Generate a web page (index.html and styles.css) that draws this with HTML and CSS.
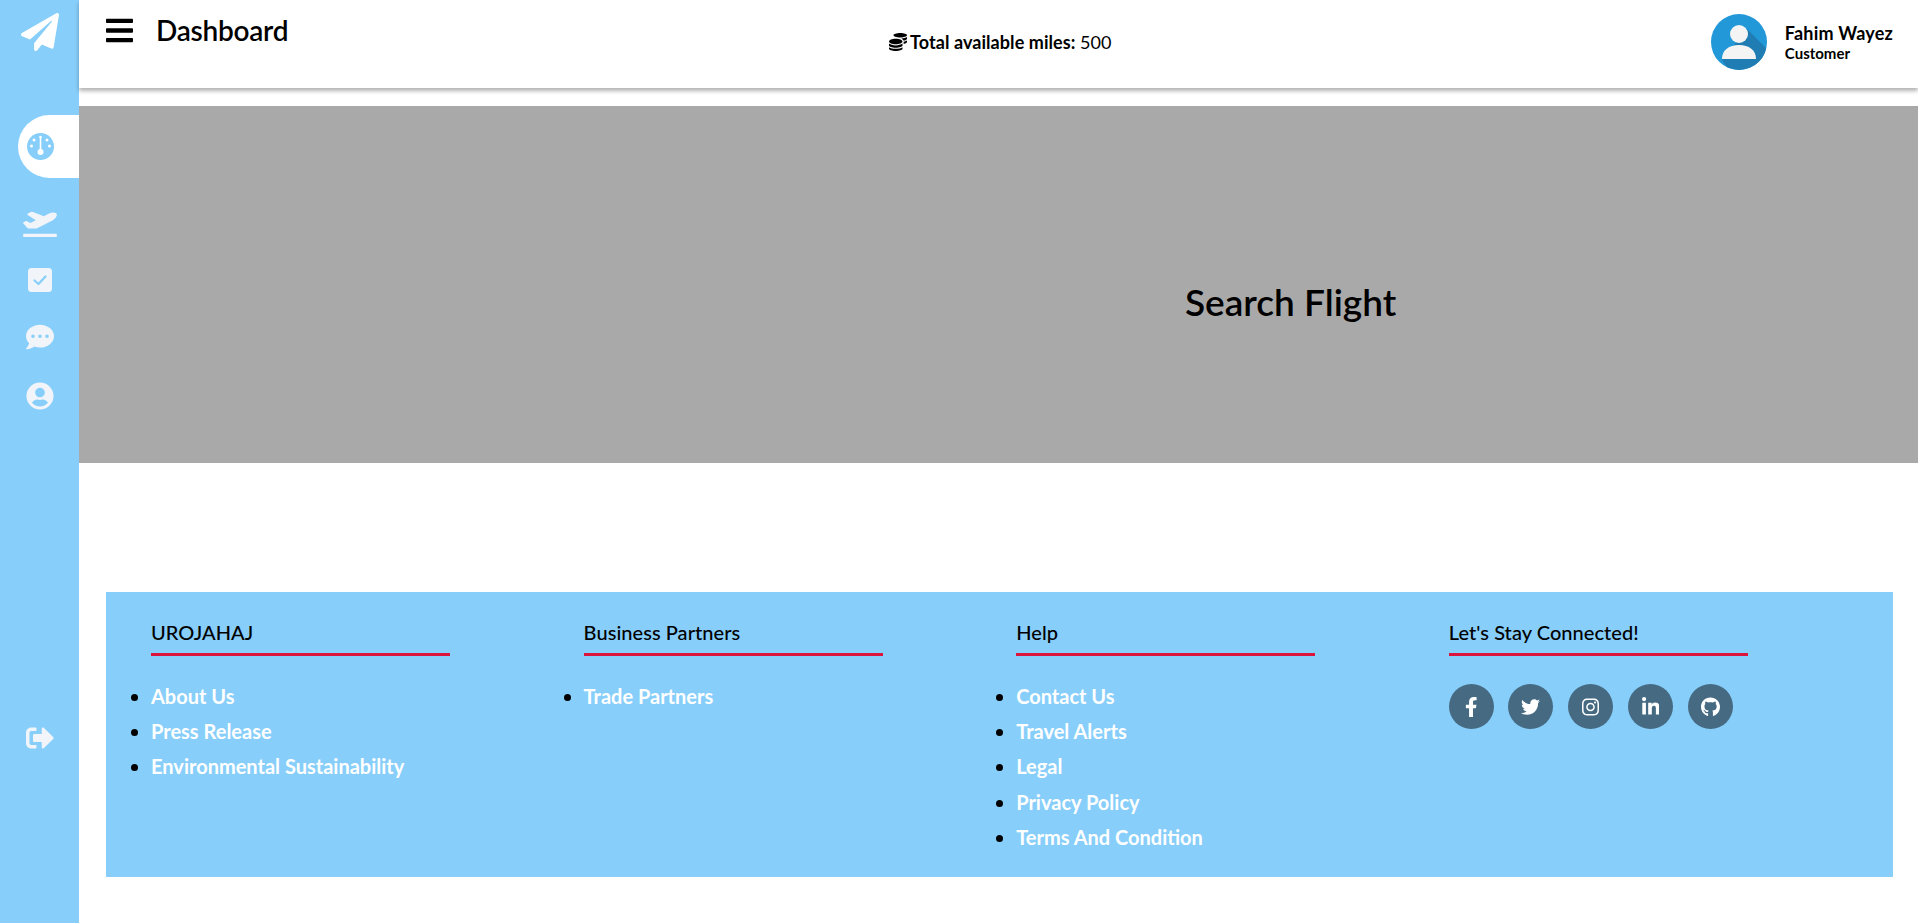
FILE: index.html
```html
<!DOCTYPE html>
<html lang="en">
<head>
<meta charset="utf-8">
<title>Dashboard</title>
<link rel="stylesheet" href="styles.css">
</head>
<body>
<div class="app">
  <aside class="sidebar">
    <svg class="logo" viewBox="0 0 512 512"><path d="M476 3.2L12.5 270.6c-18.1 10.4-15.8 35.6 2.2 43.2L121 358.4l287.3-253.2c5.5-4.9 13.3 2.6 8.6 8.3L176 407v80.5c0 23.6 28.5 32.9 42.5 15.8L282 426l124.6 52.2c14.2 6 30.4-2.9 33-18.2l72-432C515 7.8 493.3-6.8 476 3.2z"/></svg>
    <div class="pill">
      <svg class="gauge" viewBox="0 0 27 27"><circle cx="13.5" cy="13.5" r="13.5" class="gauge-bg"/><circle cx="13.5" cy="4" r="1.3" class="gauge-fg"/><circle cx="7" cy="7" r="1.5" class="gauge-fg"/><circle cx="20" cy="7" r="1.5" class="gauge-fg"/><circle cx="4.5" cy="13" r="1.5" class="gauge-fg"/><circle cx="22.5" cy="13" r="1.5" class="gauge-fg"/><rect x="12.7" y="4" width="1.6" height="14" class="gauge-fg"/><circle cx="13.5" cy="19" r="3" class="gauge-fg"/></svg>
    </div>
    <nav class="side-nav">
      <svg class="plane" viewBox="0 0 640 512"><path d="M624 448H16c-8.84 0-16 7.16-16 16v32c0 8.84 7.16 16 16 16h608c8.84 0 16-7.16 16-16v-32c0-8.84-7.16-16-16-16zM80.55 341.27c6.28 6.84 15.1 10.72 24.33 10.71l130.54-.18a65.62 65.62 0 0 0 29.64-7.12l290.96-147.65c26.74-13.57 50.71-32.94 67.02-58.31 18.31-28.48 20.3-49.09 13.07-63.65-7.21-14.57-24.74-25.27-58.25-27.45-29.85-1.94-59.54 5.92-86.28 19.48l-98.51 49.99-218.7-82.06a17.799 17.799 0 0 0-18-1.11L90.62 67.29c-10.67 5.41-13.25 19.65-5.17 28.53l156.22 98.1-103.21 52.38-72.35-36.47a17.804 17.804 0 0 0-16.07.02L9.91 230.22c-10.44 5.3-13.19 19.12-5.57 28.08l76.21 82.97z"/></svg>
      <svg class="check" viewBox="0 0 24 24"><rect width="24" height="24" rx="3.5"/><path class="check-mark" d="M6.5 12.5l4 3.5 7-7.5"/></svg>
      <svg class="nav-icon" viewBox="0 0 512 512"><path d="M256 32C114.6 32 0 125.1 0 240c0 49.6 21.4 95 57 130.7C44.5 421.1 2.7 466 2.2 466.5c-2.2 2.3-2.8 5.7-1.5 8.7S4.8 480 8 480c66.3 0 116-31.8 140.6-51.4 32.7 12.3 69 19.4 107.4 19.4 141.4 0 256-93.1 256-208S397.4 32 256 32zM128 272c-17.7 0-32-14.3-32-32s14.3-32 32-32 32 14.3 32 32-14.3 32-32 32zm128 0c-17.7 0-32-14.3-32-32s14.3-32 32-32 32 14.3 32 32-14.3 32-32 32zm128 0c-17.7 0-32-14.3-32-32s14.3-32 32-32 32 14.3 32 32-14.3 32-32 32z"/></svg>
      <svg class="nav-icon" viewBox="0 0 496 512"><path d="M248 8C111 8 0 119 0 256s111 248 248 248 248-111 248-248S385 8 248 8zm0 96c48.6 0 88 39.4 88 88s-39.4 88-88 88-88-39.4-88-88 39.4-88 88-88zm0 344c-58.7 0-111.3-26.6-146.5-68.2 18.8-35.4 55.6-59.8 98.5-59.8 2.4 0 4.8.4 7.1 1.1 13 4.2 26.6 6.9 40.9 6.9 14.3 0 28-2.7 40.9-6.9 2.3-.7 4.7-1.1 7.1-1.1 42.9 0 79.7 24.4 98.5 59.8C359.3 421.4 306.7 448 248 448z"/></svg>
    </nav>
    <svg class="logout" viewBox="0 0 512 512"><path d="M497 273L329 441c-15 15-41 4.5-41-17v-96H152c-13.3 0-24-10.7-24-24v-96c0-13.3 10.7-24 24-24h136V88c0-21.4 25.9-32 41-17l168 168c9.3 9.4 9.3 24.6 0 34zM192 436v-40c0-6.6-5.4-12-12-12H96c-17.7 0-32-14.3-32-32V160c0-17.7 14.3-32 32-32h84c6.6 0 12-5.4 12-12V76c0-6.6-5.4-12-12-12H96c-53 0-96 43-96 96v192c0 53 43 96 96 96h84c6.6 0 12-5.4 12-12z"/></svg>
  </aside>
  <main class="main">
    <header class="topbar">
      <div class="title-group">
        <svg class="bars" viewBox="0 0 448 512"><path d="M16 132h416c8.837 0 16-7.163 16-16V76c0-8.837-7.163-16-16-16H16C7.163 60 0 67.163 0 76v40c0 8.837 7.163 16 16 16zm0 160h416c8.837 0 16-7.163 16-16v-40c0-8.837-7.163-16-16-16H16c-8.837 0-16 7.163-16 16v40c0 8.837 7.163 16 16 16zm0 160h416c8.837 0 16-7.163 16-16v-40c0-8.837-7.163-16-16-16H16c-8.837 0-16 7.163-16 16v40c0 8.837 7.163 16 16 16z"/></svg>
        <h1 class="page-title">Dashboard</h1>
      </div>
      <div class="miles">
        <svg class="coins" viewBox="0 0 512 512"><path d="M0 405.3V448c0 35.3 86 64 192 64s192-28.7 192-64v-42.7C342.7 434.4 267.2 448 192 448S41.3 434.4 0 405.3zM320 128c106 0 192-28.7 192-64S426 0 320 0 128 28.7 128 64s86 64 192 64zM0 300.4V352c0 35.3 86 64 192 64s192-28.7 192-64v-51.6c-41.3 34-116.9 51.6-192 51.6S41.3 334.4 0 300.4zm416 11c57.3-11.1 96-31.7 96-55.4v-42.7c-23.2 16.4-57.3 27.6-96 34.5v63.6zM192 160C86 160 0 195.8 0 240s86 80 192 80 192-35.8 192-80-86-80-192-80zm219.3 56.3c60-10.8 100.7-32 100.7-56.3v-42.7c-35.5 25.1-96.5 38.6-160.7 41.8 29.5 14.3 51.2 33.5 60 57.2z"/></svg>
        <span><b class="miles-label">Total available miles:</b> 500</span>
      </div>
      <div class="profile">
        <svg class="avatar" viewBox="0 0 56 56"><defs><clipPath id="av"><circle cx="28" cy="28" r="28"/></clipPath></defs><circle cx="28" cy="28" r="28" class="av-bg"/><path class="av-shade" clip-path="url(#av)" d="M36 15L60 39V60H20L11 46Z"/><circle cx="28" cy="20" r="9" class="av-fg"/><path class="av-fg" d="M11 45c0-9 7-14 17-14s17 5 17 14z"/></svg>
        <div class="who">
          <div class="who-name">Fahim Wayez</div>
          <div class="who-role">Customer</div>
        </div>
      </div>
    </header>
    <section class="hero">
      <h2 class="hero-title">Search Flight</h2>
    </section>
    <footer class="footer">
      <div class="col">
        <h3 class="col-title">UROJAHAJ</h3>
        <ul class="links">
          <li>About Us</li>
          <li>Press Release</li>
          <li>Environmental Sustainability</li>
        </ul>
      </div>
      <div class="col">
        <h3 class="col-title">Business Partners</h3>
        <ul class="links">
          <li>Trade Partners</li>
        </ul>
      </div>
      <div class="col">
        <h3 class="col-title">Help</h3>
        <ul class="links">
          <li>Contact Us</li>
          <li>Travel Alerts</li>
          <li>Legal</li>
          <li>Privacy Policy</li>
          <li>Terms And Condition</li>
        </ul>
      </div>
      <div class="col">
        <h3 class="col-title">Let's Stay Connected!</h3>
        <div class="socials">
          <span class="social"><svg class="s-f" viewBox="0 0 320 512"><path d="M279.14 288l14.22-92.66h-88.91v-60.13c0-25.35 12.42-50.06 52.24-50.06h40.42V6.26S260.43 0 225.36 0c-73.22 0-121.08 44.38-121.08 124.72v70.62H22.89V288h81.39v224h100.17V288z"/></svg></span>
          <span class="social"><svg class="s-t" viewBox="0 0 512 512"><path d="M459.37 151.716c.325 4.548.325 9.097.325 13.645 0 138.72-105.583 298.558-298.558 298.558-59.452 0-114.68-17.219-161.137-47.106 8.447.974 16.568 1.299 25.34 1.299 49.055 0 94.213-16.568 130.274-44.832-46.132-.975-84.792-31.188-98.112-72.772 6.498.974 12.995 1.624 19.818 1.624 9.421 0 18.843-1.3 27.614-3.573-48.081-9.747-84.143-51.98-84.143-102.985v-1.299c13.969 7.797 30.214 12.67 47.431 13.319-28.264-18.843-46.781-51.005-46.781-87.391 0-19.492 5.197-37.36 14.294-52.954 51.655 63.675 129.3 105.258 216.365 109.807-1.624-7.797-2.599-15.918-2.599-24.04 0-57.828 46.782-104.934 104.934-104.934 30.213 0 57.502 12.67 76.67 33.137 23.715-4.548 46.456-13.32 66.599-25.34-7.798 24.366-24.366 44.833-46.132 57.827 21.117-2.273 41.584-8.122 60.426-16.243-14.292 20.791-32.161 39.308-52.628 54.253z"/></svg></span>
          <span class="social"><svg class="s-i" viewBox="0 0 448 512"><path d="M224.1 141c-63.6 0-114.9 51.3-114.9 114.9s51.3 114.9 114.9 114.9S339 319.5 339 255.9 287.7 141 224.1 141zm0 189.6c-41.1 0-74.7-33.5-74.7-74.7s33.5-74.7 74.7-74.7 74.7 33.5 74.7 74.7-33.6 74.7-74.7 74.7zm146.4-194.3c0 14.9-12 26.8-26.8 26.8-14.9 0-26.8-12-26.8-26.8s12-26.8 26.8-26.8 26.8 12 26.8 26.8zm76.1 27.2c-1.7-35.9-9.9-67.7-36.2-93.9-26.2-26.2-58-34.4-93.9-36.2-37-2.1-147.9-2.1-184.9 0-35.8 1.7-67.6 9.9-93.9 36.1s-34.4 58-36.2 93.9c-2.1 37-2.1 147.9 0 184.9 1.7 35.9 9.9 67.7 36.2 93.9s58 34.4 93.9 36.2c37 2.1 147.9 2.1 184.9 0 35.9-1.7 67.7-9.9 93.9-36.2 26.2-26.2 34.4-58 36.2-93.9 2.1-37 2.1-147.8 0-184.8zM398.8 388c-7.8 19.6-22.9 34.7-42.6 42.6-29.5 11.7-99.5 9-132.1 9s-102.7 2.6-132.1-9c-19.6-7.8-34.7-22.9-42.6-42.6-11.7-29.5-9-99.5-9-132.1s-2.6-102.7 9-132.1c7.8-19.6 22.9-34.7 42.6-42.6 29.5-11.7 99.5-9 132.1-9s102.7-2.6 132.1 9c19.6 7.8 34.7 22.9 42.6 42.6 11.7 29.5 9 99.5 9 132.1s2.7 102.7-9 132.1z"/></svg></span>
          <span class="social"><svg class="s-l" viewBox="0 0 448 512"><path d="M100.28 448H7.4V148.9h92.88zM53.79 108.1C24.09 108.1 0 83.5 0 53.8a53.79 53.79 0 0 1 107.58 0c0 29.7-24.1 54.3-53.79 54.3zM447.9 448h-92.68V302.4c0-34.7-.7-79.2-48.29-79.2-48.29 0-55.69 37.7-55.69 76.7V448h-92.78V148.9h89.08v40.8h1.3c12.4-23.5 42.69-48.3 87.88-48.3 94 0 111.28 61.9 111.28 142.3V448z"/></svg></span>
          <span class="social"><svg class="s-g" viewBox="0 0 496 512"><path d="M244.8 8C106.1 8 0 113.3 0 252c0 110.9 69.8 205.8 169.5 239.2 12.8 2.3 17.3-5.6 17.3-12.1 0-6.2-.3-40.4-.3-61.4 0 0-70 15-84.7-29.8 0 0-11.4-29.1-27.8-36.6 0 0-22.9-15.7 1.6-15.4 0 0 24.9 2 38.6 25.8 21.9 38.6 58.6 27.5 72.9 20.9 2.3-16 8.8-27.1 16-33.7-55.9-6.2-112.3-14.3-112.3-110.5 0-27.5 7.6-41.3 23.6-58.9-2.6-6.5-11.1-33.3 2.6-67.9 20.9-6.5 69 27 69 27 20-5.6 41.5-8.5 62.8-8.5s42.8 2.9 62.8 8.5c0 0 48.1-33.6 69-27 13.7 34.7 5.2 61.4 2.6 67.9 16 17.7 25.8 31.5 25.8 58.9 0 96.5-58.9 104.2-114.8 110.5 9.2 7.9 17 22.9 17 46.4 0 33.7-.3 75.4-.3 83.6 0 6.5 4.6 14.4 17.3 12.1C428.2 457.8 496 362.9 496 252 496 113.3 383.5 8 244.8 8z"/></svg></span>
        </div>
      </div>
    </footer>
  </main>
</div>
</body>
</html>
```

FILE: styles.css
```css
* { box-sizing: border-box; }
html, body { margin: 0; height: 100%; overflow: hidden; }
body { font-family: "Lato", "Liberation Sans", sans-serif; color: #000; background: #fff; }
.app { display: flex; height: 923px; }

.sidebar { width: 79px; flex: none; background: #87cefa; display: flex; flex-direction: column; align-items: center; padding-top: 13px; }
.sidebar svg { fill: #f1f5f9; display: block; }
.sidebar .logo { width: 38px; height: 38px; fill: #fff; }
.pill { align-self: flex-end; width: 61px; height: 63px; margin-top: 64px; background: #fff; border-radius: 32px 0 0 32px; display: flex; align-items: center; padding-left: 9px; }
.sidebar .gauge { width: 27px; height: 27px; }
.gauge-bg { fill: #87cefa; }
.gauge-fg { fill: #fff; }
.side-nav { display: flex; flex-direction: column; align-items: center; margin-top: 32px; gap: 31px; }
.plane { width: 34px; height: 27px; }
.check { width: 24px; height: 24px; }
.check-mark { fill: none; stroke: #87cefa; stroke-width: 2.2; stroke-linecap: round; stroke-linejoin: round; }
.nav-icon { width: 28px; height: 28px; }
.logout { width: 28px; height: 28px; margin-top: 314px; }

.main { flex: 1; min-width: 0; display: flex; flex-direction: column; }
.topbar { height: 88px; flex: none; display: flex; background: #fff; box-shadow: 0 3px 4px rgba(0, 0, 0, .3); padding-left: 27px; padding-right: 25px; position: relative; }
.title-group { display: flex; align-items: center; height: 60px; width: 600px; gap: 23px; flex: none; }
.bars { width: 27px; height: 31px; flex: none; }
.page-title { margin: 0; font-size: 28px; font-weight: 600; letter-spacing: -.25px; line-height: 34px; }
.miles { margin-top: 30px; font-size: 18px; line-height: 24px; height: 24px; display: flex; align-items: center; gap: 3px; white-space: nowrap; margin-left: 183px; }
.coins { width: 18px; height: 18px; flex: none; }
.miles-label { font-weight: 700; letter-spacing: .07px; }
.profile { margin-left: auto; display: flex; align-items: flex-start; gap: 18px; padding-top: 14px; }
.avatar { width: 56px; height: 56px; flex: none; display: block; }
.av-bg { fill: #2298d8; }
.av-shade { fill: #1f7db3; }
.av-fg { fill: #f4f4f4; }
.who { padding-top: 8px; }
.who-name { font-size: 18px; font-weight: 700; letter-spacing: .2px; line-height: 22px; }
.who-role { font-size: 15px; font-weight: 700; line-height: 18px; }

.hero { margin-top: 18px; height: 357px; flex: none; background: #a9a9a9; display: flex; align-items: center; padding-left: 1106px; padding-top: 34px; }
.hero-title { margin: 0; font-size: 37px; font-weight: 600; line-height: 44px; white-space: nowrap; }

.footer { margin: 129px 25px 0 27px; height: 285px; flex: none; background: #87cefa; display: grid; grid-template-columns: repeat(4, 432.6px); padding-left: 45px; padding-top: 26px; }
.col-title { margin: 0; width: 299px; font-size: 20px; font-weight: 500; letter-spacing: .05px; line-height: 28px; padding-bottom: 7px; border-bottom: 3px solid #dc143c; }
.links { margin: 23px 0 0; padding: 0; font-size: 20px; font-weight: 700; color: #fff; }
.links li { line-height: 35.2px; height: 35.2px; }
.links li::marker { color: #000; }
.socials { display: flex; gap: 14.7px; margin-top: 28px; }
.social { width: 45px; height: 45px; border-radius: 50%; background: #456a82; display: flex; align-items: center; justify-content: center; }
.social svg { fill: #fff; height: 20px; display: block; }
.s-f { width: 12.5px; }
.s-t { width: 19px; }
.s-i { width: 17px; }
.s-l { width: 17.5px; }
.s-g { width: 19px; }
```
